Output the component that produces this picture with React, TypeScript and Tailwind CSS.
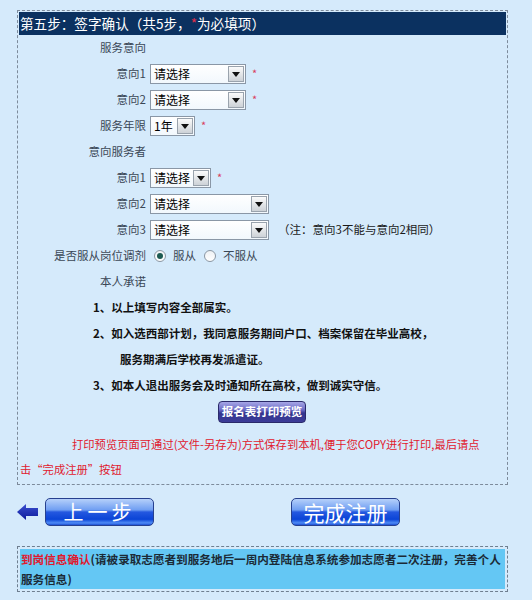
import React from "react";

function Select({ w, text }: { w: string; text: string }) {
  return (
    <div className={`flex h-[20px] ${w} items-center border border-[#8a97a6] bg-gradient-to-b from-white to-[#f2f8fd]`}>
      <span className="flex-1 pl-[3px] text-[12px] leading-[18px] text-black whitespace-nowrap overflow-hidden">{text}</span>
      <span className="m-px flex h-[16px] w-[16px] items-center justify-center border border-[#9aa3ad] bg-gradient-to-b from-[#fbfbfb] to-[#cdd2d7]">
        <svg width="8" height="5" viewBox="0 0 8 5">
          <polygon points="0,0 8,0 4,5" fill="#111" />
        </svg>
      </span>
    </div>
  );
}

function Star() {
  return <span className="ml-[6px] -mt-[1px] text-[11px] leading-none text-[#d9405e]">*</span>;
}

function Row({ label, children }: { label?: string; children?: React.ReactNode }) {
  return (
    <div className="flex h-[26px] items-center">
      <div className="w-[127px] shrink-0 text-right text-[11.5px] text-[#3a4756] whitespace-nowrap">{label}</div>
      <div className="ml-[4px] flex items-center">{children}</div>
    </div>
  );
}

function Radio({ checked }: { checked?: boolean }) {
  return (
    <span className="flex h-[12px] w-[12px] items-center justify-center rounded-full border border-[#8b97a3] bg-gradient-to-b from-[#eef1f4] to-white">
      {checked && <span className="h-[6px] w-[6px] rounded-full bg-[#1d5a52]" />}
    </span>
  );
}

export default function App() {
  return (
    <div className="h-[600px] w-[532px] overflow-hidden bg-[#d5eafb] pt-[10px] font-['Noto_Sans_CJK_SC',sans-serif]">
      <div className="ml-[17px] w-[491px] border border-dashed border-[#7d8b9b] p-px pb-[2px]">
        <div className="h-[23px] bg-[#0b3160] pl-px text-[13.6px] leading-[23px] text-white whitespace-nowrap">
          第五步：签字确认（共5步，<span className="text-[#e0304a]">*</span>为必填项）
        </div>
        <Row label="服务意向" />
        <Row label="意向1">
          <Select w="w-[96px]" text="请选择" />
          <Star />
        </Row>
        <Row label="意向2">
          <Select w="w-[96px]" text="请选择" />
          <Star />
        </Row>
        <Row label="服务年限">
          <Select w="w-[45px]" text="1年" />
          <Star />
        </Row>
        <Row label="意向服务者" />
        <Row label="意向1">
          <Select w="w-[61px]" text="请选择" />
          <Star />
        </Row>
        <Row label="意向2">
          <Select w="w-[119px]" text="请选择" />
        </Row>
        <Row label="意向3">
          <Select w="w-[119px]" text="请选择" />
          <span className="ml-[9px] text-[11.5px] text-[#1a1a1a] whitespace-nowrap">（注：意向3不能与意向2相同）</span>
        </Row>
        <Row label="是否服从岗位调剂">
          <span className="ml-[4px]"><Radio checked /></span>
          <span className="ml-[7px] text-[11.5px] text-[#3a4756]">服从</span>
          <span className="ml-[8px]"><Radio /></span>
          <span className="ml-[7px] text-[11.5px] text-[#3a4756]">不服从</span>
        </Row>
        <Row label="本人承诺" />
        <div className="flex h-[26px] items-center pl-[74px] text-[11.5px] font-bold text-[#111] whitespace-nowrap">1、以上填写内容全部属实。</div>
        <div className="flex h-[26px] items-center pl-[74px] text-[11.5px] font-bold text-[#111] whitespace-nowrap">2、如入选西部计划，我同意服务期间户口、档案保留在毕业高校，</div>
        <div className="flex h-[26px] items-center pl-[101px] text-[11.5px] font-bold text-[#111] whitespace-nowrap">服务期满后学校再发派遣证。</div>
        <div className="flex h-[26px] items-center pl-[74px] text-[11.5px] font-bold text-[#111] whitespace-nowrap">3、如本人退出服务会及时通知所在高校，做到诚实守信。</div>
        <div className="flex h-[26px] items-center pl-[199px]">
          <div className="flex h-[22px] w-[88px] items-center justify-center rounded-[4px] border border-[#2a2a6a] bg-[linear-gradient(to_bottom,#a6a6e6_0%,#6a6ac4_40%,#34348e_55%,#3c3c98_100%)] text-[11.5px] font-bold text-white whitespace-nowrap">
            报名表打印预览
          </div>
        </div>
        <div className="mt-[7px] pl-px text-[11.3px] leading-[25px] text-[#e0202e] whitespace-nowrap">
          <div className="pl-[52px]">打印预览页面可通过(文件-另存为)方式保存到本机,便于您COPY进行打印,最后请点</div>
          <div>击“完成注册”按钮</div>
        </div>
      </div>

      <div className="mt-[13px] flex h-[28px] items-center pl-[17px]">
        <svg width="21" height="16" viewBox="0 0 21 16">
          <defs>
            <linearGradient id="ag" x1="0" y1="0" x2="0" y2="1">
              <stop offset="0" stopColor="#3a4fd0" />
              <stop offset="1" stopColor="#0d1a9a" />
            </linearGradient>
          </defs>
          <polygon points="0,8 9,0 9,4 21,4 21,12 9,12 9,16" fill="url(#ag)" />
        </svg>
        <div className="ml-[7px] flex h-[28px] w-[109px] items-center justify-center rounded-[5px] border border-[#26408f] bg-[linear-gradient(to_bottom,#b5d0fa_0%,#6f9ef2_42%,#2458e0_50%,#0b44d6_78%,#4f8cf5_92%,#1c4fd4_100%)] text-[20px] leading-none tracking-[4px] text-white">
          上一步
        </div>
        <div className="ml-[137px] flex h-[28px] w-[109px] items-center justify-center rounded-[5px] border border-[#26408f] bg-[linear-gradient(to_bottom,#b5d0fa_0%,#6f9ef2_42%,#2458e0_50%,#0b44d6_78%,#4f8cf5_92%,#1c4fd4_100%)] text-[21px] leading-none text-white">
          完成注册
        </div>
      </div>

      <div className="ml-[17px] mt-[20px] w-[491px] border border-dashed border-[#6f7f90] p-[2px]">
        <div className="bg-[#64c7f4] pl-px text-[11.6px] font-bold leading-[20px] text-[#1b2a36] whitespace-nowrap">
          <div>
            <span className="text-[#e0182c]">到岗信息确认</span>(请被录取志愿者到服务地后一周内登陆信息系统参加志愿者二次注册，完善个人
          </div>
          <div>服务信息)</div>
        </div>
      </div>
    </div>
  );
}
